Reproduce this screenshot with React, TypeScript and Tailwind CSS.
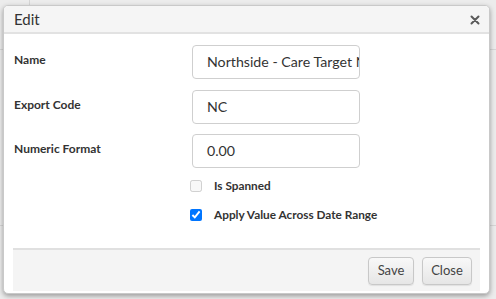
import React from "react";

export default function App() {
  const font = { fontFamily: "Lato, 'Open Sans', sans-serif" };
  return (
    <div className="relative w-[496px] h-[299px] overflow-hidden bg-[#ececec]" style={font}>
      {/* page behind the overlay */}
      <div className="flex flex-col w-full h-full">
        <div className="flex h-[50px] border-b border-[#d6d6d6]">
          <div className="w-[30px] border-r border-[#d6d6d6]" />
          <div className="flex-1" />
        </div>
        <div className="h-[176px] border-b border-[#d6d6d6]" />
        <div className="flex-1" />
      </div>

      {/* dialog */}
      <div className="absolute left-[3px] top-[5px] w-[487px] h-[289px] bg-white rounded-[5px] border border-[#c9c9c9] shadow-[0_2px_5px_rgba(0,0,0,0.35)] flex flex-col overflow-hidden">
        <div className="h-[28px] shrink-0 bg-[#f5f5f5] border-b-2 border-[#e2e2e2] flex items-center justify-between pl-[10px] pr-[9px]">
          <span className="text-[15px] text-[#333]">Edit</span>
          <svg width="10" height="10" viewBox="0 0 10 10" className="mt-[1px]">
            <path d="M1.5 1.5 L8.5 8.5 M8.5 1.5 L1.5 8.5" stroke="#5a5a5a" strokeWidth="2" strokeLinecap="round" />
          </svg>
        </div>

        <div className="flex-1 flex flex-col pl-[10px] pt-[11px]">
          <div className="flex items-start">
            <div className="w-[178px] pt-[7px] text-[12px] font-bold text-[#333] leading-[16px]">Name</div>
            <div className="w-[168px] h-[34px] border border-[#cfcfcf] rounded-[4px] pl-[14px] flex items-center overflow-hidden text-[14.2px] text-[#333]">
              <span className="whitespace-nowrap shrink-0">Northside - Care Target Nursing</span>
            </div>
          </div>
          <div className="flex items-start mt-[11px]">
            <div className="w-[178px] pt-[7px] text-[12px] font-bold text-[#333] leading-[16px]">Export Code</div>
            <div className="w-[168px] h-[34px] border border-[#cfcfcf] rounded-[4px] pl-[14px] flex items-center text-[14.2px] text-[#333]">
              NC
            </div>
          </div>
          <div className="flex items-start mt-[10px]">
            <div className="w-[178px] pt-[7px] text-[12px] font-bold text-[#333] leading-[16px]">Numeric Format</div>
            <div className="w-[168px] h-[34px] border border-[#cfcfcf] rounded-[4px] pl-[14px] flex items-center text-[14.2px] text-[#333]">
              0.00
            </div>
          </div>

          <div className="flex items-center mt-[12px] pl-[176px] h-[12px]">
            <input type="checkbox" disabled className="w-[12px] h-[12px] m-0" />
            <span className="ml-[12px] text-[11.8px] font-bold text-[#333]">Is Spanned</span>
          </div>
          <div className="flex items-center mt-[17px] pl-[176px] h-[12px]">
            <input type="checkbox" checked readOnly className="w-[12px] h-[12px] m-0" />
            <span className="ml-[12px] text-[11.8px] font-bold text-[#333]">Apply Value Across Date Range</span>
          </div>
        </div>

        <div className="mx-[9px] mb-[2px] h-[43px] shrink-0 bg-[#f4f4f4] border-t-2 border-[#e0e0e0] flex items-start justify-end gap-[8px] pt-[7px] pr-[8px]">
          <button className="w-[46px] h-[28px] rounded-[4px] border border-[#c8c8c8] bg-gradient-to-b from-[#f8f8f8] to-[#e6e6e6] text-[13px] text-[#444] shadow-[0_1px_1px_rgba(0,0,0,0.08)]">
            Save
          </button>
          <button className="w-[50px] h-[28px] rounded-[4px] border border-[#c8c8c8] bg-gradient-to-b from-[#f8f8f8] to-[#e6e6e6] text-[13px] text-[#444] shadow-[0_1px_1px_rgba(0,0,0,0.08)]">
            Close
          </button>
        </div>
      </div>
    </div>
  );
}
